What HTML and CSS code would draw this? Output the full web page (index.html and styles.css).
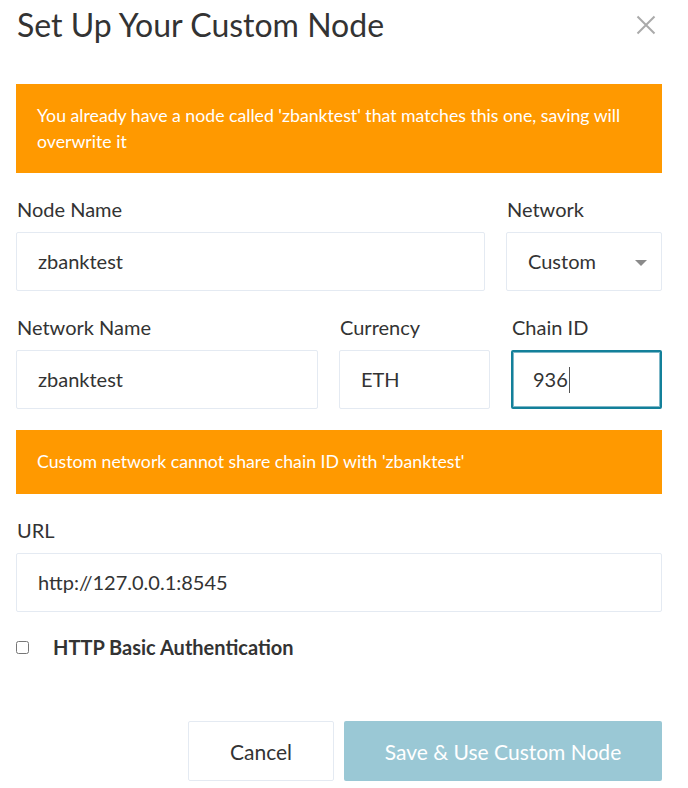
FILE: index.html
```html
<!DOCTYPE html>
<html>
<head>
<meta charset="utf-8">
<link rel="stylesheet" href="styles.css">
</head>
<body>
<div class="modal">
  <div class="header">
    <h1 class="title">Set Up Your Custom Node</h1>
    <span class="close" aria-label="close">
      <svg width="20" height="20" viewBox="0 0 20 20"><path d="M1.5 1.5 L18.5 18.5 M18.5 1.5 L1.5 18.5" stroke="#aaaaaa" stroke-width="2" fill="none"/></svg>
    </span>
  </div>

  <div class="alert alert-first">You already have a node called 'zbanktest' that matches this one, saving will overwrite it</div>

  <div class="row">
    <div class="field grow">
      <div class="label">Node Name</div>
      <div class="input">zbanktest</div>
    </div>
    <div class="field w156">
      <div class="label">Network</div>
      <div class="input select">Custom<span class="arrow"></span></div>
    </div>
  </div>

  <div class="row">
    <div class="field grow">
      <div class="label">Network Name</div>
      <div class="input">zbanktest</div>
    </div>
    <div class="field w151">
      <div class="label">Currency</div>
      <div class="input">ETH</div>
    </div>
    <div class="field w151">
      <div class="label">Chain ID</div>
      <div class="input focused">936<span class="caret"></span></div>
    </div>
  </div>

  <div class="alert alert-second">Custom network cannot share chain ID with 'zbanktest'</div>

  <div class="row">
    <div class="field grow">
      <div class="label">URL</div>
      <div class="input">http://127.0.0.1:8545</div>
    </div>
  </div>

  <label class="check-row">
    <input type="checkbox" class="checkbox">
    <span class="check-label">HTTP Basic Authentication</span>
  </label>

  <div class="actions">
    <button class="btn btn-cancel">Cancel</button>
    <button class="btn btn-save">Save &amp; Use Custom Node</button>
  </div>
</div>
</body>
</html>
```

FILE: styles.css
```css
* { box-sizing: border-box; }
html, body { margin: 0; padding: 0; background: #fff; }
body {
  font-family: Lato, "Open Sans", sans-serif;
  color: #333;
}
.modal {
  width: 688px;
  padding: 0 26px 0 16px;
}
.header {
  display: flex;
  align-items: center;
  justify-content: space-between;
  height: 50px;
  margin-bottom: 34px;
}
.title {
  margin: 0;
  font-size: 32px;
  font-weight: 400;
  line-height: 50px;
  color: #333;
  padding-left: 1px;
}
.close {
  display: flex;
  width: 20px;
  height: 20px;
  margin-right: 6px;
}
.alert {
  background: #ff9900;
  color: #fff;
  font-size: 17.7px;
  line-height: 26px;
  padding: 19px 20px 18px 21px;
}
.alert-second {
  margin-top: 21px;
  padding: 19px 20px 19px 21px;
}
.row {
  display: flex;
  gap: 21px;
  margin-top: 21px;
}
.field { display: flex; flex-direction: column; }
.grow { flex: 1; }
.w156 { width: 156px; }
.w151 { width: 151px; }
.label {
  font-size: 20px;
  line-height: 30px;
  margin-bottom: 8px;
  padding-left: 1px;
}
.input {
  height: 59px;
  border: 1px solid #e4eaf2;
  border-radius: 2px;
  font-size: 20px;
  line-height: 57px;
  padding: 0 21px;
  color: #333;
  position: relative;
  display: flex;
  align-items: center;
}
.select { justify-content: space-between; padding-right: 14px; }
.arrow {
  width: 0;
  height: 0;
  border-left: 6px solid transparent;
  border-right: 6px solid transparent;
  border-top: 6px solid #8a8a8a;
  margin-top: 2px;
}
.focused {
  border: 2px solid #13809a;
  box-shadow: inset 0 0 0 1px #7fb8c8;
  padding-left: 20px;
}
.caret {
  display: inline-block;
  width: 1px;
  height: 26px;
  background: #555;
  margin-left: 1px;
}
.check-row {
  display: flex;
  align-items: center;
  margin-top: 21px;
  height: 28px;
}
.checkbox {
  margin: 0 24px 0 0;
  width: 13px;
  height: 13px;
}
.check-label {
  font-size: 20px;
  font-weight: 700;
  color: #333;
}
.actions {
  display: flex;
  justify-content: flex-end;
  gap: 10px;
  margin-top: 60px;
}
.btn {
  height: 60px;
  border-radius: 2px;
  font-family: Lato, "Open Sans", sans-serif;
  font-size: 21px;
  cursor: pointer;
}
.btn-cancel {
  width: 146px;
  background: #fff;
  border: 1px solid #e4eaf2;
  color: #333;
}
.btn-save {
  width: 318px;
  background: #9ac8d5;
  border: none;
  color: #fff;
}
```
